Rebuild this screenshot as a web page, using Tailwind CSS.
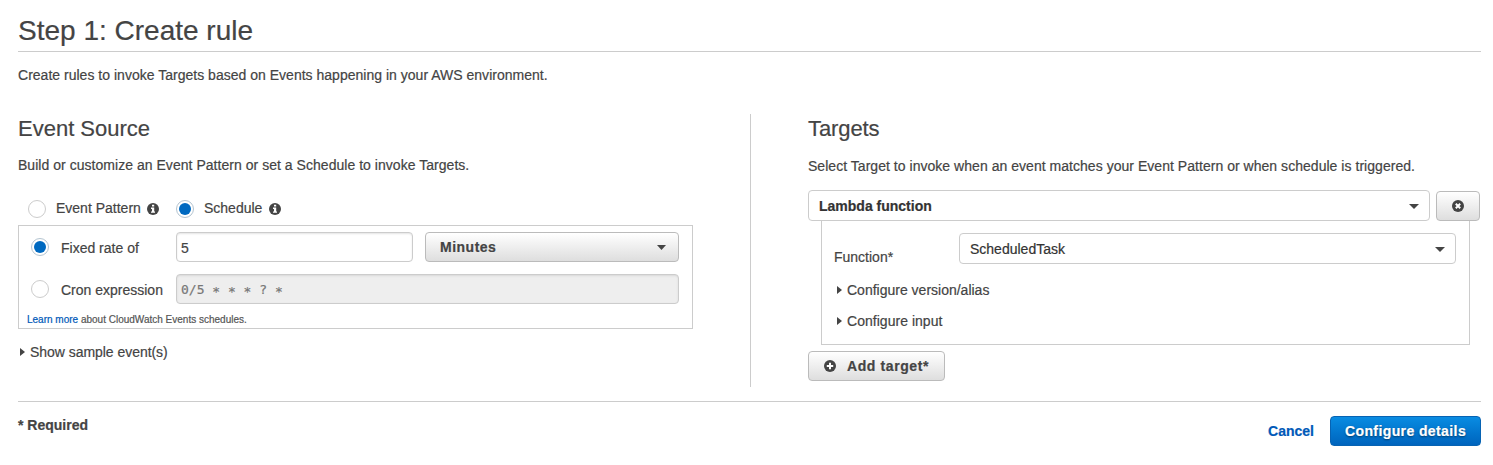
<!DOCTYPE html>
<html lang="en">
<head>
<meta charset="utf-8">
<title>Create rule</title>
<script src="https://cdn.jsdelivr.net/npm/@tailwindcss/browser@4"></script>
</head>
<body class="bg-white font-['Liberation_Sans',Arial,sans-serif] text-[14px] leading-5 text-[#444] whitespace-nowrap [-webkit-text-stroke:0.2px]">
<div class="w-[1493px] h-[465px] overflow-hidden pl-[18px] pr-[12px] flex flex-col">
  <header class="h-[52px] border-b border-[#ccc] pt-[11px] shrink-0">
    <h1 class="text-[28px] leading-10"><span>Step 1: Create rule</span></h1>
  </header>
  <p class="h-[62px] pt-[13px] shrink-0 tracking-[0.015px]"><span>Create rules to invoke Targets based on Events happening in your AWS environment.</span></p>

  <main class="h-[273px] flex shrink-0">
    <section class="w-[733px] border-r border-[#ccc] flex flex-col">
      <h2 class="text-[22px] leading-7 pt-px"><span>Event Source</span></h2>
      <p class="mt-[12px] tracking-[0.035px]"><span>Build or customize an Event Pattern or set a Schedule to invoke Targets.</span></p>
      <div class="mt-[23px] h-5 flex items-center pl-[10px]">
        <span class="relative top-px size-[18px] rounded-full border border-[#ccc]"></span>
        <span class="ml-[10px] w-[85px]">Event Pattern</span>
        <svg class="relative top-px ml-[6px] w-3 h-3" viewBox="0 0 12 12"><circle cx="6" cy="6" r="6" fill="#444"/><path d="M5 1.8h2.2v1.6H5zM4 4.6h3.2v3.8H8v1.4H4V8.4h1V6H4z" fill="#fff"/></svg>
        <span class="relative top-px ml-[17px] size-[18px] rounded-full border border-[#b4c4d0] flex items-center justify-center"><span class="size-3 rounded-full bg-[#0069c0]"></span></span>
        <span class="ml-[10px] w-[59px]">Schedule</span>
        <svg class="relative top-px ml-[6px] w-3 h-3" viewBox="0 0 12 12"><circle cx="6" cy="6" r="6" fill="#444"/><path d="M5 1.8h2.2v1.6H5zM4 4.6h3.2v3.8H8v1.4H4V8.4h1V6H4z" fill="#fff"/></svg>
      </div>
      <div class="mt-[7px] w-[675px] h-[104px] border border-[#ccc] pt-[6px] pl-[12px] shrink-0">
        <div class="flex items-center h-[30px]">
          <span class="size-[18px] rounded-full border border-[#b4c4d0] flex items-center justify-center"><span class="size-3 rounded-full bg-[#0069c0]"></span></span>
          <span class="ml-[12px] w-[115px] pt-[2px]">Fixed rate of</span>
          <div class="w-[237px] h-[30px] rounded border border-[#ccc] shadow-[inset_0_1px_2px_#e4e4e4] pl-1 leading-[30px]">5</div>
          <div class="ml-3 w-[254px] h-[30px] rounded border border-[#bbb] bg-linear-to-b from-white to-[#dedede] pl-[14px] pr-3 flex items-center justify-between font-bold"><span class="tracking-[0.5px]">Minutes</span>
            <svg class="w-[9px] h-[5px]" viewBox="0 0 9 5"><path d="M0 0h9L4.5 5z" fill="#444"/></svg></div>
        </div>
        <div class="mt-3 flex items-center h-[30px]">
          <span class="size-[18px] rounded-full border border-[#ccc]"></span>
          <span class="ml-[12px] w-[115px] pt-[2px]">Cron expression</span>
          <div class="w-[503px] h-[30px] rounded border border-[#ccc] bg-[#eee] shadow-[inset_0_1px_2px_#d8d8d8] pl-1 leading-[30px] font-['DejaVu_Sans_Mono',monospace] text-[13px] text-[#777]">0/5 <span class="relative top-[2px]">* * *</span> ? <span class="relative top-[2px]">*</span></div>
        </div>
        <p class="-ml-1 mt-[6px] text-[10px] text-[#555]"><a class="text-[#0059b8]">Learn more</a> <span>about CloudWatch Events schedules.</span></p>
      </div>
      <div class="mt-[13px] flex items-center pl-[2px]">
        <svg class="w-[5px] h-2" viewBox="0 0 5 8"><path d="M0 0l5 4-5 4z" fill="#444"/></svg>
        <span class="ml-[5px] -tracking-[0.04px]">Show sample event(s)</span>
      </div>
    </section>

    <section class="ml-[57px] w-[673px] flex flex-col">
      <h2 class="text-[22px] leading-7 pt-px -tracking-[0.1px]"><span>Targets</span></h2>
      <p class="mt-[13px] tracking-[0.035px]"><span>Select Target to invoke when an event matches your Event Pattern or when schedule is triggered.</span></p>
      <div class="mt-[14px] h-[31px] flex items-end">
        <div class="w-[622px] h-[31px] rounded border border-[#ccc] bg-white pl-[10px] pr-[10px] flex items-center justify-between font-bold text-[#333]"><span>Lambda function</span>
          <svg class="w-[10px] h-[5px] mt-px" viewBox="0 0 10 5"><path d="M0 0h10L5 5z" fill="#444"/></svg></div>
        <div class="ml-[6px] w-11 h-[30px] rounded border border-[#bbb] bg-linear-to-b from-white to-[#dedede] flex items-center justify-center">
          <svg class="w-3 h-3" viewBox="0 0 12 12"><circle cx="6" cy="6" r="6" fill="#444"/><path d="M3.8 3.8l4.4 4.4M8.2 3.8L3.8 8.2" stroke="#fff" stroke-width="2"/></svg>
        </div>
      </div>
      <div class="ml-[13px] w-[649px] h-[124px] border border-t-0 border-[#ccc] pl-3 pt-3 shrink-0">
        <div class="flex h-[31px]">
          <span class="w-[125px] pt-[14px]">Function*</span>
          <div class="w-[497px] h-[31px] rounded border border-[#ccc] pl-[10px] pr-[10px] flex items-center justify-between text-[#333]"><span>ScheduledTask</span>
            <svg class="w-[10px] h-[5px] mt-px" viewBox="0 0 10 5"><path d="M0 0h10L5 5z" fill="#444"/></svg></div>
        </div>
        <div class="mt-4 flex items-center pl-[3px]">
          <svg class="w-[5px] h-2" viewBox="0 0 5 8"><path d="M0 0l5 4-5 4z" fill="#444"/></svg>
          <span class="ml-[5px]">Configure version/alias</span>
        </div>
        <div class="mt-[11px] flex items-center pl-[3px]">
          <svg class="w-[5px] h-2" viewBox="0 0 5 8"><path d="M0 0l5 4-5 4z" fill="#444"/></svg>
          <span class="ml-[5px] tracking-[0.03px]">Configure input</span>
        </div>
      </div>
      <div class="mt-[6px] w-[137px] h-[30px] rounded border border-[#bbb] bg-linear-to-b from-white to-[#dedede] pl-[15px] flex items-center font-bold shrink-0">
        <svg class="w-3 h-3" viewBox="0 0 12 12"><circle cx="6" cy="6" r="6" fill="#444"/><path d="M6 2.8v6.4M2.8 6h6.4" stroke="#fff" stroke-width="2"/></svg>
        <span class="ml-[11px] tracking-[0.6px]">Add target*</span>
      </div>
    </section>
  </main>

  <footer class="mt-[14px] border-t border-[#ccc] flex justify-between">
    <p class="pt-[13px] font-bold"><span>* Required</span></p>
    <div class="mt-[14px] h-[30px] flex items-center font-bold">
      <a class="text-[#0059b8] mr-4"><span>Cancel</span></a>
      <div class="w-[151px] h-[30px] rounded border border-[#0763b3] bg-linear-to-b from-[#0a8ce2] to-[#0064bd] text-white flex items-center justify-center [text-shadow:0_1px_2px_rgba(0,0,0,0.5)]"><span class="tracking-[0.4px]">Configure details</span></div>
    </div>
  </footer>
</div>
</body>
</html>
